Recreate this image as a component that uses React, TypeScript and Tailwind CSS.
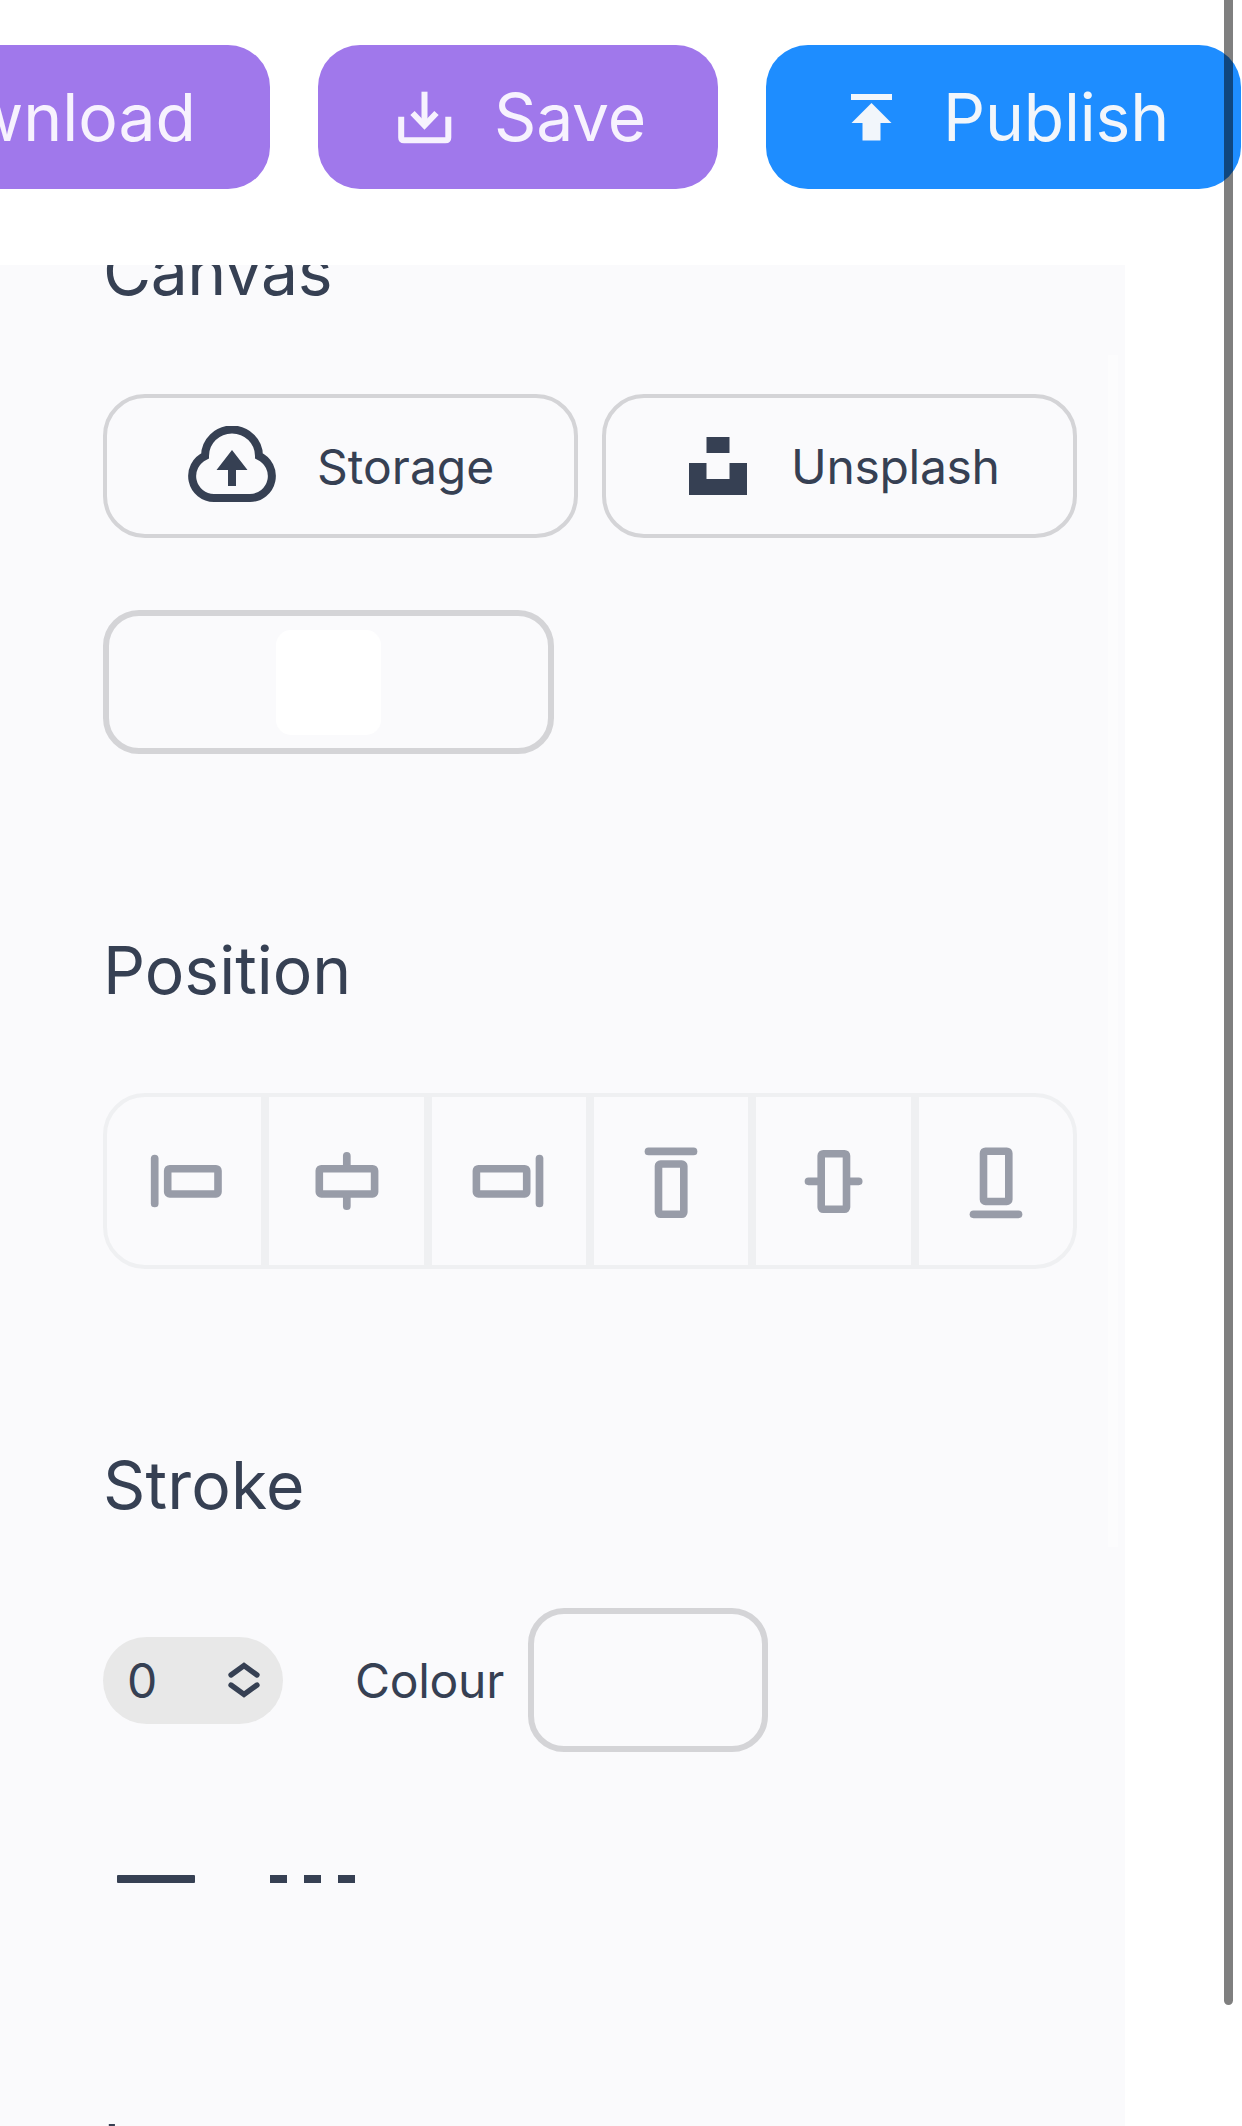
import type { ReactNode } from "react";

function DownloadTrayIcon() {
  return (
    <svg className="h-[54px] w-[54px] shrink-0" viewBox="0 0 54 54" fill="none" stroke="currentColor" strokeWidth="6">
      <path d="M26.500 1.700V35" />
      <path d="M14.500 23L26.500 35.500L38.500 23" />
      <path d="M3.200 26.800V47.500Q3.200 50.300 6 50.300H47.500Q50.300 50.300 50.300 47.500V26.800" />
    </svg>
  );
}

function PublishIcon() {
  return (
    <svg className="h-[48px] w-[41px] shrink-0" viewBox="0 0 41 48" fill="currentColor">
      <path d="M0 1H41V7H0ZM20.500 10L40.500 30H29.500V47.500H11.500V30H.5Z" />
    </svg>
  );
}

function CloudIcon() {
  return (
    <svg className="mb-[4px] h-[76px] w-[88px] shrink-0" viewBox="0 0 88 76" fill="none">
      <path
        d="M17 30A27 26.500 0 0 1 71 30A22 22 0 0 1 62 72H26A22 22 0 0 1 17 30Z"
        stroke="currentColor"
        strokeWidth="8"
      />
      <path d="M44 24L59.500 44H48V60H40V44H28.500Z" fill="currentColor" />
    </svg>
  );
}

function UnsplashIcon() {
  return (
    <svg className="h-[58px] w-[58px] shrink-0" viewBox="0 0 58 58" fill="currentColor">
      <path d="M17.500 0H40.500V16H17.500ZM0 26H17.500V42H40.500V26H58V58H0Z" />
    </svg>
  );
}

type AlignShape = { line: string; x: number; y: number; w: number; h: number };

const alignShapes: AlignShape[] = [
  { line: "M10.700 17.600V62.500", x: 23.7, y: 27.7, w: 50.3, h: 25.3 },
  { line: "M40.800 14.800V25M40.800 55V65.200", x: 13.3, y: 27.7, w: 55.3, h: 25.3 },
  { line: "M70.500 17.600V62.500", x: 7.4, y: 27.7, w: 50.3, h: 25.3 },
  { line: "M17.500 10.400H62.500", x: 27.5, y: 23, w: 25.3, h: 50.3 },
  { line: "M15.500 40.300H27M54 40.300H65.700", x: 28.2, y: 12.7, w: 25.3, h: 55.6 },
  { line: "M17.500 73.300H62.500", x: 27.5, y: 10.2, w: 25.3, h: 50.3 },
];

function AlignIcon({ shape }: { shape: AlignShape }) {
  return (
    <svg className="h-20 w-20 shrink-0" viewBox="0 0 80 80" fill="none" stroke="#989ca8">
      <path d={shape.line} strokeWidth="7.700" strokeLinecap="round" />
      <rect x={shape.x} y={shape.y} width={shape.w} height={shape.h} rx="2" strokeWidth="7.600" />
    </svg>
  );
}

function Heading({ children }: { children: ReactNode }) {
  return <h2 className="h-24 text-[66px] leading-[96px] whitespace-nowrap">{children}</h2>;
}

export default function App() {
  return (
    <div className="relative flex h-[2126px] w-[1242px] flex-col overflow-hidden bg-white font-['Inter',sans-serif] text-[#364053]">
      <header className="flex h-[265px] shrink-0 items-start justify-end gap-12 overflow-hidden pt-[45px] pr-px text-[66px] leading-[144px] text-[#f7f2fe]">
        <button className="flex h-36 w-[520px] shrink-0 items-center justify-end rounded-[42px] bg-[#a078eb] pr-[74px]">
          Download
        </button>
        <button className="flex h-36 w-[400px] shrink-0 items-center rounded-[42px] bg-[#a078eb] pl-[80px]">
          <DownloadTrayIcon />
          <span className="ml-[42px] tracking-[-0.2px]">Save</span>
        </button>
        <button className="flex h-36 w-[475px] shrink-0 items-center rounded-[42px] bg-[#1e8dff] pl-[85px] text-[#f2f6fb]">
          <PublishIcon />
          <span className="ml-[51px] tracking-[-0.2px]">Publish</span>
        </button>
      </header>

      <main className="relative min-h-0 w-[1125px] flex-1 overflow-hidden bg-[#fafafc] pl-[103px]">
        <div className="-mt-[42px] flex w-[974px] flex-col gap-[168px]">
          <section>
            <Heading>
              <span className="tracking-[-0.5px]">Canvas</span>
            </Heading>
            <div className="mt-[75px] flex justify-between text-[48px]">
              <button className="flex h-36 w-[475px] items-center rounded-[42px] border-4 border-[#d4d4d7] pl-[81px]">
                <CloudIcon />
                <span className="ml-[41px] pt-[2px]">Storage</span>
              </button>
              <button className="flex h-36 w-[475px] items-center rounded-[42px] border-4 border-[#d4d4d7] pl-[83px]">
                <UnsplashIcon />
                <span className="ml-[44px] pt-[2px] tracking-[-0.3px]">Unsplash</span>
              </button>
            </div>
            <button className="mt-[72px] flex h-36 w-[451px] items-center justify-center rounded-[36px] border-6 border-[#d4d4d7]">
              <span className="h-[105px] w-[105px] rounded-[15px] bg-white" />
            </button>
          </section>

          <section>
            <Heading>Position</Heading>
            <div className="mt-[75px] grid h-44 grid-cols-6">
              {alignShapes.map((shape, i) => (
                <button
                  key={i}
                  className="flex items-center justify-center border-4 border-[#eff0f2] first:rounded-l-[42px] last:rounded-r-[42px]"
                >
                  <AlignIcon shape={shape} />
                </button>
              ))}
            </div>
          </section>

          <section>
            <Heading>
              <span className="tracking-[0.2px]">Stroke</span>
            </Heading>
            <div className="mt-[75px] flex h-36 items-center text-[48px]">
              <div className="flex h-[87px] w-[180px] items-center justify-between rounded-full bg-[#e8e8e8] pr-[23px] pl-6">
                <span className="pt-[2px]">0</span>
                <svg className="h-[36px] w-[32px]" viewBox="0 0 32 36" fill="none" stroke="currentColor" strokeWidth="5.300" strokeLinecap="round">
                  <path d="M3 13L16 3.500L29 13M3 23L16 32.500L29 23" />
                </svg>
              </div>
              <span className="ml-[72px] pt-[2px] tracking-[-0.3px]">Colour</span>
              <button className="mr-[309px] ml-auto h-36 w-[240px] rounded-[36px] border-6 border-[#d4d4d7]" />
            </div>
            <div className="mt-[74px] flex h-[106px] items-center gap-[75px] pl-[14px]">
              <span className="h-2 w-[78px] rounded-[1px] bg-current" />
              <span className="flex gap-[17px]">
                <span className="h-2 w-[17px] bg-current" />
                <span className="h-2 w-[17px] bg-current" />
                <span className="h-2 w-[17px] bg-current" />
              </span>
            </div>
          </section>

          <Heading>Layers</Heading>
        </div>
        <div className="absolute top-[90px] right-[7px] h-[1192px] w-[10px] bg-[#fcfcfd]" />
      </main>

      <div className="absolute top-0 right-[9px] h-[2005px] w-[9px] rounded-b-full bg-black/50" />
    </div>
  );
}
